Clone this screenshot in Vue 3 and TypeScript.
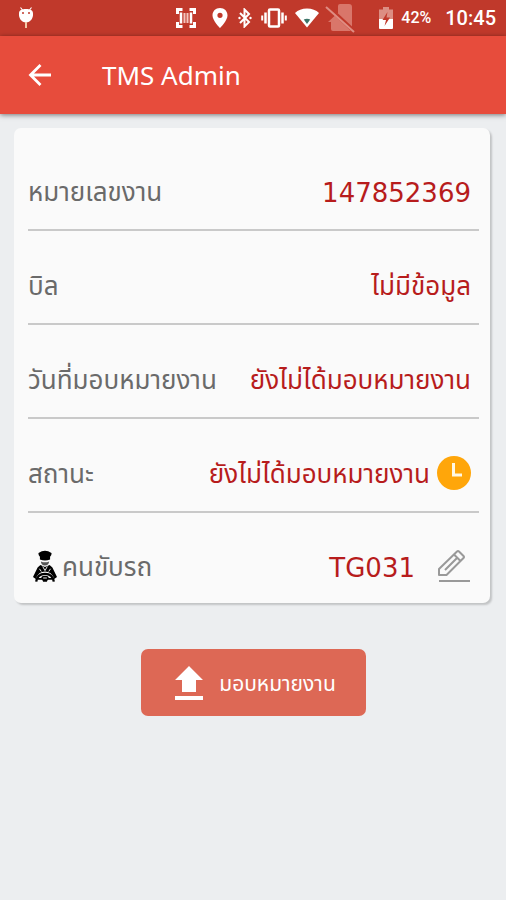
<script setup lang="ts">
import { ref } from 'vue'

interface Row {
  id: string
  label: string
  value: string
  plain: boolean
  icon?: 'clock' | 'edit'
}

const rows = ref<Row[]>([
  { id: 'number', label: 'หมายเลขงาน', value: '147852369', plain: true },
  { id: 'bill', label: 'บิล', value: 'ไม่มีข้อมูล', plain: false },
  { id: 'date', label: 'วันที่มอบหมายงาน', value: 'ยังไม่ได้มอบหมายงาน', plain: false },
  { id: 'status', label: 'สถานะ', value: 'ยังไม่ได้มอบหมายงาน', plain: false, icon: 'clock' },
  { id: 'driver', label: 'คนขับรถ', value: 'TG031', plain: true, icon: 'edit' },
])
</script>

<template>
  <div class="screen">
    <div class="status">
      <svg class="bug" viewBox="0 0 16 22" width="16" height="22" aria-hidden="true">
        <path d="M2.500 0.500L4.500 3M13.500 0.500L11.500 3" stroke="#fff" stroke-width="1.200" />
        <path d="M1 6.500C1 3 4 2 8 2s7 1 7 4.500C15.500 11 12.500 15.500 8 15.500S.5 11 1 6.500z" fill="#fff" />
        <path d="M8 15v6" stroke="#f3c9a8" stroke-width="2" />
        <circle cx="5" cy="6" r="1" fill="#c0392b" /><circle cx="11" cy="6" r="1" fill="#c0392b" />
      </svg>
      <div class="tray">
        <svg viewBox="0 0 22 22" width="22" height="22" aria-hidden="true">
          <path d="M2.500 7V2.500h5M14.500 2.500h5v4.500M19.500 15v4.500h-5M7.500 19.500h-5V15" fill="none" stroke="#fff" stroke-width="3" />
          <path d="M6 5.500v11M16 5.500v11" stroke="#fff" stroke-width="2.500" />
          <path d="M9.500 6v10M12.500 6v10" stroke="#f3c5bd" stroke-width="2" />
        </svg>
        <svg class="pin" viewBox="0 0 16 20" width="16" height="20" aria-hidden="true">
          <path fill="#fff" fill-rule="evenodd" d="M8 0C3.600 0 .5 3.200.5 7.400.5 12.500 8 20 8 20s7.500-7.500 7.500-12.600C15.500 3.200 12.400 0 8 0zm0 4.700a2.600 2.600 0 1 1 0 5.200 2.600 2.600 0 0 1 0-5.200z" />
        </svg>
        <svg class="bluetooth" viewBox="0 0 14 20" width="14" height="20" aria-hidden="true">
          <path d="M2 5l9 9-4.500 4.500v-17L11 6l-9 9" fill="none" stroke="#fff" stroke-width="2" />
          <circle cx="1.500" cy="10" r="1.200" fill="#fff" /><circle cx="12.500" cy="10" r="1.200" fill="#fff" />
        </svg>
        <svg class="vibrate" viewBox="0 0 26 20" width="26" height="20" aria-hidden="true">
          <rect x="8" y="1.500" width="10" height="17" rx="1" fill="none" stroke="#fff" stroke-width="2.500" />
          <path d="M4.500 4.500v11M21.500 4.500v11" stroke="#fff" stroke-width="2.500" />
          <path d="M1.200 7.500v5M24.800 7.500v5" stroke="#fff" stroke-width="2" />
        </svg>
        <svg class="wifi" viewBox="0 0 24 20" width="24" height="20" aria-hidden="true">
          <path d="M0 5C3 2 7 .5 12 .5S21 2 24 5L12 19.500z" fill="#fff" />
          <path d="M8.800 11.500q3.200-1.600 6.400 0L12 16z" fill="#3c7468" />
        </svg>
        <svg class="nosim" viewBox="0 0 30 30" width="30" height="30" aria-hidden="true">
          <path d="M15 1h9q3 0 3 3v22q0 2-2 2H8q-2 0-2-2v-9l7-7V3q0-2 2-2z" fill="#d9766a" />
          <path d="M3 19L14 9v10z" fill="#d9766a" />
          <path d="M2 3l28 26" stroke="#c0392b" stroke-width="4" />
          <path d="M1 4l28 25" stroke="#df8d83" stroke-width="2" />
        </svg>
        <svg class="battery" viewBox="0 0 14 22" width="14" height="22" aria-hidden="true">
          <path d="M4 0h6v2.500h4V12H0V2.500h4z" fill="#dc8e83" />
          <path d="M0 12h14v9q0 1-1 1H1q-1 0-1-1z" fill="#fff" />
          <path d="M8.500 5L3.500 13H7l-1.500 6L11 10.500H7.500z" fill="#c0392b" />
        </svg>
        <span class="percent">42%</span>
        <span class="time">10:45</span>
      </div>
    </div>

    <header class="bar">
      <button class="back" type="button" aria-label="กลับ">
        <svg viewBox="0 0 24 24" width="24" height="24" aria-hidden="true">
          <path d="M23 12H3M12.500 2L2.500 12l10 10" fill="none" stroke="#fff" stroke-width="2.800" />
        </svg>
      </button>
      <h1>TMS Admin</h1>
    </header>

    <main>
      <dl class="card">
        <div v-for="row in rows" :key="row.id" class="row">
          <dt>
            <svg v-if="row.id === 'driver'" class="driver" viewBox="0 0 26 36" width="24" height="34" aria-hidden="true">
              <path d="M6 4Q13-1 20 4q.5 2-1.500 4H7.500Q5.500 6 6 4zM7.500 8h11v3q-5.500 2-11 0z" />
              <path d="M8.500 13q4.500 2 9 0-.5 4-4.500 4.500-4-.5-4.500-4.500z" fill="#555" />
              <path d="M8 17L13 19l5-2 3 2.500L26 30l-3 2q-3-8-10-8T3 32l-3-2 5-10.500z" />
              <path d="M10.500 18.500l2.500 4.500 2.500-4.500M7 21l2 3M19 21l-2 3" fill="none" stroke="#fafafa" stroke-width="1" />
              <path d="M3.500 35q1-8.500 9.500-8.500t9.500 8.500" fill="none" stroke="#000" stroke-width="2.500" />
              <path d="M5 31h16v2h-5l-1 2h-4l-1-2H5z" /><ellipse cx="13" cy="31" rx="4" ry="2.500" />
              <path d="M11 31h4" stroke="#fafafa" />
            </svg>
            {{ row.label }}
          </dt>
          <dd>
            <span :class="{ plain: row.plain }">{{ row.value }}</span>
            <svg v-if="row.icon === 'clock'" class="clock" viewBox="0 0 34 34" width="34" height="34" aria-hidden="true">
              <circle cx="17" cy="17" r="17" fill="#ffa60a" />
              <path d="M16.500 7v12H25" fill="none" stroke="#fff8e3" stroke-width="3" />
            </svg>
            <button v-if="row.icon === 'edit'" class="edit" type="button" aria-label="แก้ไข">
              <svg viewBox="0 0 34 34" width="34" height="34" aria-hidden="true">
                <path d="M2 26V20L20 2.500q1-1 2 0L26.500 7q1 1 0 2L9.500 26zM17 5.500l6.500 6.500M8 21L20 9" fill="none" stroke="#999" stroke-width="2" stroke-linejoin="round" />
                <path d="M2 32h31" stroke="#999" stroke-width="2" />
              </svg>
            </button>
          </dd>
        </div>
      </dl>

      <button class="assign" type="button">
        <svg viewBox="0 0 30 34" width="30" height="34" aria-hidden="true">
          <path d="M15 0l14 14h-7v12H8V14H1zM1 30h28v4H1z" fill="#fff" />
        </svg>
        <span>มอบหมายงาน</span>
      </button>
    </main>
  </div>
</template>

<style>
body {
  margin: 0;
  background: #eceef0;
}
</style>

<style scoped>
.screen {
  min-height: 100vh;
  background: #eceef0;
  font-family: "Noto Sans Thai", "Noto Sans", "DejaVu Sans", sans-serif;
}
.status {
  display: flex;
  align-items: center;
  justify-content: space-between;
  height: 36px;
  padding: 0 10px 0 18px;
  background: #c0392b;
  color: #fff;
  font-family: Roboto, sans-serif;
}
svg {
  display: block;
  flex: none;
}
.tray {
  display: flex;
  align-items: center;
}
.pin {
  margin-left: 15px;
}
.bluetooth {
  margin-left: 10px;
}
.vibrate {
  margin-left: 9px;
}
.wifi {
  margin-left: 8px;
}
.nosim {
  margin-left: 6px;
}
.battery {
  margin-left: 24px;
}
.percent {
  margin-left: 8px;
  font-size: 16px;
  font-weight: 500;
  line-height: 20px;
}
.time {
  margin-left: 14px;
  font-size: 20px;
  font-weight: 500;
}
.bar {
  display: flex;
  align-items: center;
  height: 78px;
  padding-left: 28px;
  background: #e74c3c;
  box-shadow: 0 1px 5px rgba(0, 0, 0, 0.5);
}
button {
  border: 0;
  font: inherit;
  cursor: pointer;
}
.back {
  padding: 0;
  background: none;
}
h1 {
  margin: 0 0 0 50px;
  padding-top: 4px;
  color: #fff;
  font-size: 26px;
  font-weight: 400;
}
main {
  display: flex;
  flex-direction: column;
  align-items: center;
  padding: 14px 16px 0 14px;
}
.card {
  align-self: stretch;
  margin: 0;
  padding: 9px 11px 0 14px;
  border-radius: 7px;
  background: #fafafa;
  box-shadow: 2px 2px 2px rgba(0, 0, 0, 0.18);
}
.row {
  display: flex;
  align-items: center;
  justify-content: space-between;
  box-sizing: border-box;
  height: 94px;
  padding: 19px 8px 0 0;
  border-bottom: 2px solid #c9c9c9;
}
.row:last-child {
  border-bottom: 0;
  height: 90px;
}
dt,
dd {
  display: flex;
  align-items: center;
  margin: 0;
  font-size: 26px;
  line-height: 40px;
  white-space: nowrap;
}
dt {
  color: #6a6a6a;
}
dd {
  color: #b71c1c;
}
.plain {
  font-family: "DejaVu Sans", sans-serif;
}
.driver {
  margin: 0 5px;
}
.clock {
  margin-left: 7px;
}
.edit {
  margin-left: 22px;
  padding: 0;
  background: none;
}
.driver,
.clock,
.edit {
  margin-bottom: 4px;
}
.assign {
  display: flex;
  align-items: center;
  justify-content: center;
  gap: 15px;
  width: 225px;
  height: 67px;
  margin: 46px 0 0 2px;
  padding: 0 0 0 4px;
  border-radius: 7px;
  background: #dd6855;
  color: #fff;
  font-size: 21px;
}
.assign span {
  padding-top: 4px;
}
</style>
